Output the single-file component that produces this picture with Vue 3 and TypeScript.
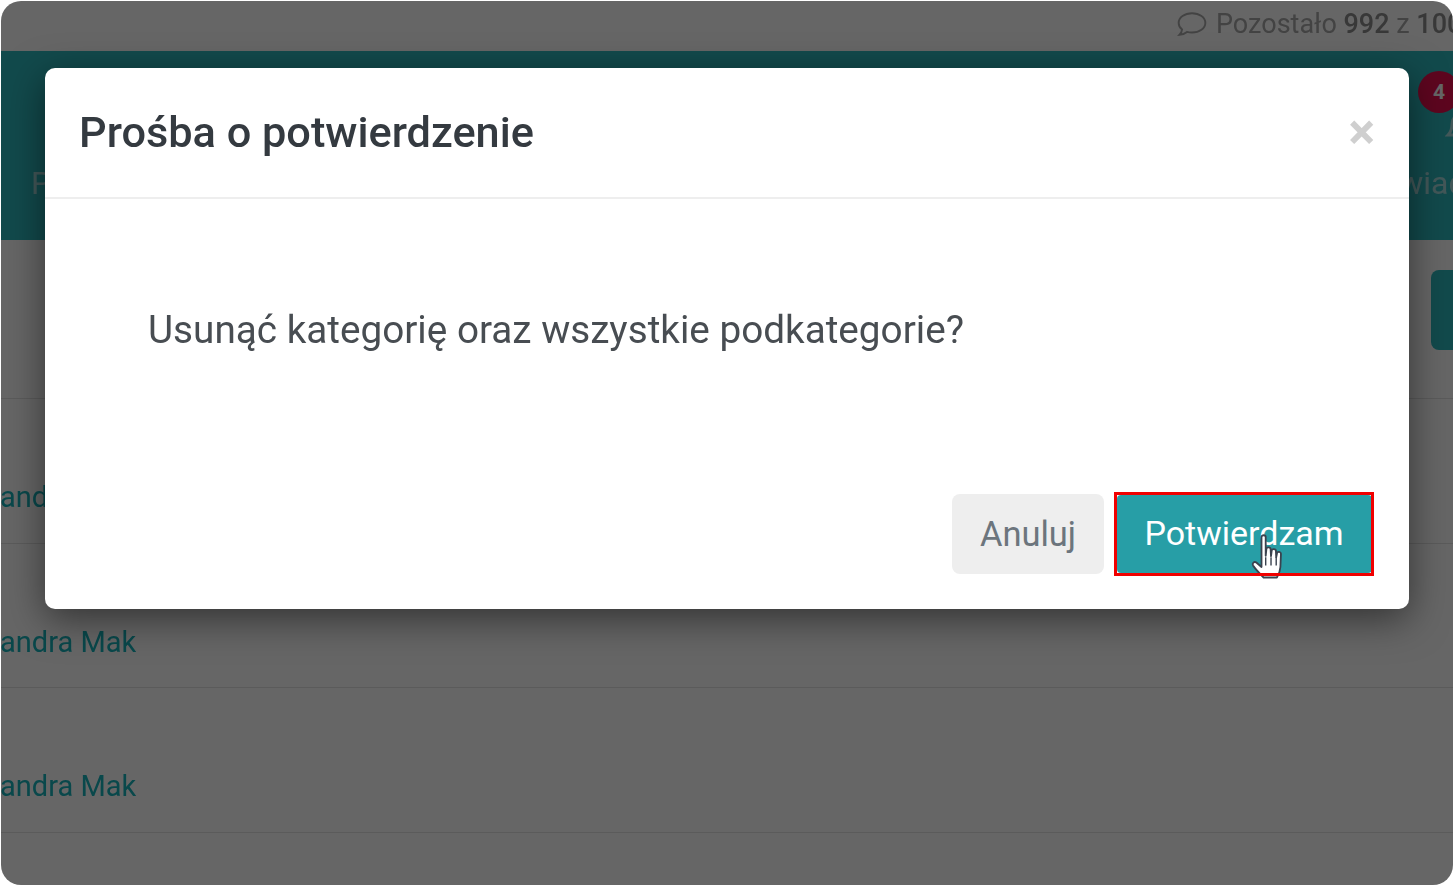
<template>
  <div class="frame">
    <div class="page">
      <div class="quota">
        <svg class="quota-icon" viewBox="0 0 30 26" width="32" height="28" fill="none" stroke="currentColor" stroke-width="1.800">
          <path d="M15 3C8 3 2.500 6.800 2.500 12c0 2.400 1.200 4.500 3.200 6.100-.2 1.800-1 3.600-2.400 5 2.700-.2 5.200-1.200 7-2.700 1.500.4 3.100.6 4.700.6 7 0 12.500-3.800 12.500-9S22 3 15 3z" />
        </svg>
        <span>Pozostało <b>992</b> z <b>1000</b></span>
      </div>

      <header class="nav">
        <span class="nav-item">Pulpit</span>
        <div class="nav-right">
          <span class="badge">4</span>
          <svg class="bell" viewBox="0 0 30 30" width="30" height="30" fill="none" stroke="#a9dcdf" stroke-width="3">
            <path d="M3 24c3-3 4-6 4-11 0-5 3.500-9 8-9s8 4 8 9c0 5 1 8 4 11z" />
          </svg>
          <span class="nav-item nav-item-right">Powiadomienia</span>
        </div>
      </header>

      <div class="toolbar">
        <span class="toolbar-btn"></span>
      </div>

      <div v-for="(row, i) in rows" :key="i" class="row">
        <span class="row-name">{{ row }}</span>
      </div>
    </div>

    <div class="backdrop">
      <div class="modal">
        <div class="modal-header">
          <h3 class="modal-title">Prośba o potwierdzenie</h3>
          <span class="modal-close">×</span>
        </div>
        <div class="modal-body">
          <p>Usunąć kategorię oraz wszystkie podkategorie?</p>
        </div>
        <div class="modal-footer">
          <button class="btn btn-cancel">Anuluj</button>
          <div class="confirm-wrap">
            <button class="btn btn-confirm">
              Potwierdzam
              <svg class="cursor" viewBox="0 0 26 40" width="37" height="56">
                <path
                  d="M8 3.500c0-1.600 3-1.600 3 0V17l.5-5c.1-1.500 3-1.400 3 .2l.3 5 .5-4c.2-1.400 3-1.200 3 .3l.2 4.500.6-3c.3-1.300 2.800-1 2.800.5l-.4 9.500c-.2 3.500-1.400 5.500-2.500 7.500H9.500C7 30 4.500 27.500 2 24c-1-1.500.8-3.300 2.300-2.200L8 25z"
                  fill="#fff"
                  stroke="#3a424e"
                  stroke-width="1.300"
                  stroke-linejoin="round"
                />
                <path d="M11 18v6M14.800 18v6M18.500 18v6" stroke="#3a424e" stroke-width="1" />
              </svg>
            </button>
          </div>
        </div>
      </div>
    </div>
  </div>
</template>

<script setup lang="ts">
const rows: string[] = ['Aleksandra Mak', 'Aleksandra Mak', 'Aleksandra Mak']
</script>

<style>
html,
body {
  margin: 0;
  background: #fff;
}
</style>

<style scoped>
.frame {
  position: relative;
  width: 1452px;
  height: 884px;
  margin: 1px 0 0 1px;
  border-radius: 20px;
  overflow: hidden;
  font-family: Roboto, 'Liberation Sans', sans-serif;
  background: #fff;
  filter: blur(0.4px);
}

.page {
  height: 100%;
  overflow: hidden;
  display: flex;
  flex-direction: column;
}

.quota {
  height: 46px;
  padding-bottom: 4px;
  flex: none;
  display: flex;
  align-items: center;
  gap: 8px;
  padding-left: 1175px;
  white-space: nowrap;
  color: #a8a8a8;
  font-size: 27px;
}

.quota b {
  font-weight: 500;
  color: #8c8c8c;
}

.quota-icon {
  flex: none;
}

.nav {
  height: 189px;
  flex: none;
  display: flex;
  justify-content: space-between;
  background: #2fb9bf;
  color: #a9dcdf;
  font-size: 32px;
  overflow: hidden;
}

.nav-item {
  padding: 113px 0 0 30px;
}

.nav-right {
  position: relative;
  width: 45px;
  flex: none;
}

.nav-item-right {
  display: block;
  padding: 113px 0 0 0;
  margin-left: -47px;
  white-space: nowrap;
}

.badge {
  position: absolute;
  left: 10px;
  top: 20px;
  width: 42px;
  height: 42px;
  border-radius: 50%;
  background: #e8104f;
  color: #fff;
  font-size: 21px;
  font-weight: 700;
  line-height: 42px;
  text-align: center;
}

.bell {
  position: absolute;
  left: 37px;
  top: 60px;
}

.toolbar {
  height: 159px;
  flex: none;
  box-sizing: border-box;
  border-bottom: 1.500px solid #e4e4e4;
  display: flex;
  justify-content: flex-end;
  padding-top: 30px;
}

.toolbar-btn {
  width: 22px;
  height: 80px;
  border-radius: 8px 0 0 8px;
  background: #2fb9bf;
}

.row {
  height: 144.700px;
  flex: none;
  box-sizing: border-box;
  border-bottom: 1.500px solid #e4e4e4;
  display: flex;
  align-items: center;
  padding-top: 52px;
  overflow: hidden;
}

.row-name {
  margin-left: -72px;
  font-size: 29px;
  white-space: nowrap;
  color: #17b3bb;
}

.backdrop {
  position: absolute;
  inset: 0;
  background: rgba(0, 0, 0, 0.6);
}

.modal {
  position: absolute;
  left: 44px;
  top: 67px;
  width: 1364px;
  height: 541px;
  display: flex;
  flex-direction: column;
  border-radius: 10px;
  background: #fff;
  box-shadow: 0 10px 38px rgba(0, 0, 0, 0.5);
}

.modal-header {
  height: 131px;
  flex: none;
  box-sizing: border-box;
  border-bottom: 2px solid #eeeeee;
  display: flex;
  align-items: center;
  justify-content: space-between;
  padding: 0 34px 1px 34px;
}

.modal-title {
  margin: 0;
  font-size: 43.300px;
  font-weight: 500;
  color: #343a40;
}

.modal-close {
  font-size: 50px;
  font-weight: 700;
  line-height: 1;
  color: #cfcfcf;
}

.modal-body {
  flex: 1;
  padding: 110px 0 0 103px;
}

.modal-body p {
  margin: 0;
  font-size: 38.700px;
  line-height: 42px;
  color: #484d52;
}

.modal-footer {
  display: flex;
  justify-content: flex-end;
  align-items: center;
  gap: 10px;
  padding: 0 35px 33px 0;
}

.btn {
  position: relative;
  height: 80px;
  border: 0;
  border-radius: 8px;
  font-family: inherit;
  font-size: 34.500px;
}

.btn-cancel {
  width: 152px;
  background: #eeeeee;
  color: #6c757d;
}

.confirm-wrap {
  position: relative;
  width: 260px;
  height: 84px;
  box-sizing: border-box;
  padding: 3px 2px 3px 3px;
}

.confirm-wrap::after {
  content: '';
  position: absolute;
  inset: 0;
  border: 3px solid #f00000;
  pointer-events: none;
}

.btn-confirm {
  display: block;
  width: 255px;
  height: 78px;
  padding: 0 3px 2px 2px;
  border-radius: 4px;
  background: #279ea6;
  color: #fff;
  font-size: 34px;
}

.cursor {
  position: absolute;
  left: 133px;
  top: 37px;
}
</style>
